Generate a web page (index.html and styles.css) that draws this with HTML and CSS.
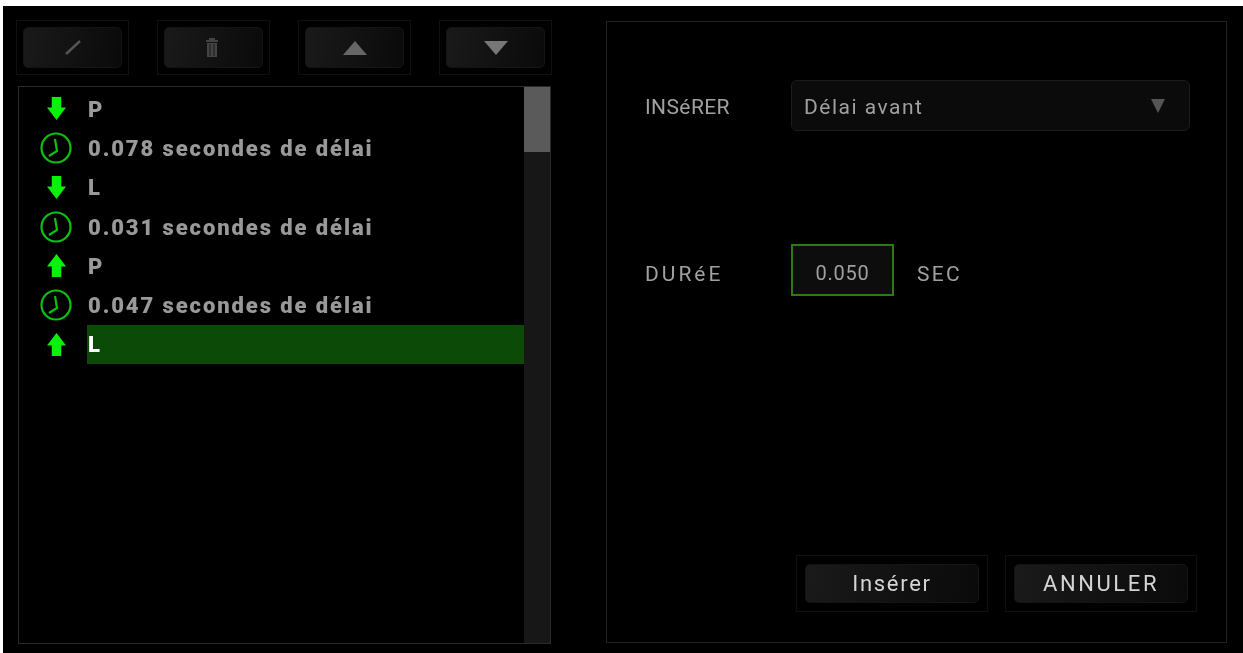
FILE: index.html
```html
<!DOCTYPE html>
<html lang="fr">
<head>
    <meta charset="UTF-8">
    <title>Macro</title>
    <link rel="stylesheet" href="styles.css">
</head>
<body>
    <svg class="defs" width="0" height="0">
        <symbol id="down" viewBox="0 0 20 26"><path d="M5 1h10v11h5L10 25 0 12h5z"/></symbol>
        <symbol id="up" viewBox="0 0 20 26"><path d="M5 25h10V14h5L10 1 0 14h5z"/></symbol>
        <symbol id="clock" viewBox="0 0 32 32">
            <circle cx="16" cy="16" r="14.5" fill="none" stroke="currentColor" stroke-width="2.2"/>
            <path d="M15 7l2 12-8 5" fill="none" stroke="currentColor" stroke-width="2.2"/>
        </symbol>
    </svg>
    <div class="app">
        <div class="listCol">
            <div class="toolbar">
                <div class="frame"><button class="btn">
                    <svg width="16" height="15" viewBox="0 0 16 15"><path d="M1 14L15 1" stroke="#555" stroke-width="2.4"/></svg>
                </button></div>
                <div class="frame"><button class="btn">
                    <svg class="trash" width="14" height="19" viewBox="0 0 14 19"><path d="M4 0h6v2h3v2H1V2h3zM2 5h10v14H2z" fill="#444"/><path d="M5 6v12M9 6v12" stroke="#1a1a1a"/></svg>
                </button></div>
                <div class="frame"><button class="btn">
                    <svg width="24" height="14" viewBox="0 0 24 14"><path d="M12 0l12 14H0z" fill="#666"/></svg>
                </button></div>
                <div class="frame"><button class="btn">
                    <svg width="24" height="14" viewBox="0 0 24 14"><path d="M0 0h24L12 14z" fill="#777"/></svg>
                </button></div>
            </div>
            <div class="list">
                <div class="rows">
                    <div class="row"><span class="ico"><svg class="arrow"><use href="#down"/></svg></span><span class="txt">P</span></div>
                    <div class="row"><span class="ico"><svg class="clock"><use href="#clock"/></svg></span><span class="txt">0.078 secondes de délai</span></div>
                    <div class="row"><span class="ico"><svg class="arrow"><use href="#down"/></svg></span><span class="txt">L</span></div>
                    <div class="row"><span class="ico"><svg class="clock"><use href="#clock"/></svg></span><span class="txt">0.031 secondes de délai</span></div>
                    <div class="row"><span class="ico"><svg class="arrow"><use href="#up"/></svg></span><span class="txt">P</span></div>
                    <div class="row"><span class="ico"><svg class="clock"><use href="#clock"/></svg></span><span class="txt">0.047 secondes de délai</span></div>
                    <div class="row selected"><span class="ico"><svg class="arrow"><use href="#up"/></svg></span><span class="txt">L</span></div>
                </div>
                <div class="scrollbar"><div class="thumb"></div></div>
            </div>
        </div>
        <div class="panel">
            <div class="field">
                <span class="label">INSéRER</span>
                <div class="select">
                    <span>Délai avant</span>
                    <svg width="14" height="14" viewBox="0 0 14 14"><path d="M0 0h14L7 14z" fill="#555"/></svg>
                </div>
            </div>
            <div class="field durationField">
                <span class="label">DURéE</span>
                <div class="input">0.050</div>
                <span class="unit">SEC</span>
            </div>
            <div class="footer">
                <div class="frame wide"><button class="btn">Insérer</button></div>
                <div class="frame wide"><button class="btn">ANNULER</button></div>
            </div>
        </div>
    </div>
</body>
</html>
```

FILE: styles.css
```css
html, body {
    height: 100%;
}
body {
    margin: 0;
    background: #fff;
    overflow: hidden;
    font-family: Roboto, "Liberation Sans", sans-serif;
}
.defs {
    position: absolute;
}
.app {
    display: flex;
    box-sizing: border-box;
    margin: 6px 0 0 3px;
    height: 647px;
    padding: 14px 0 0 13px;
    background: #000;
    filter: blur(0.4px);
}
.listCol {
    width: 537px;
}
.toolbar {
    display: flex;
    gap: 28px;
}
.frame {
    box-sizing: border-box;
    width: 113px;
    height: 55px;
    padding: 6px;
    border: 1px solid #101010;
}
.btn {
    display: flex;
    align-items: center;
    justify-content: center;
    box-sizing: border-box;
    width: 100%;
    height: 100%;
    padding: 0;
    border: 1px solid #141414;
    border-radius: 5px;
    background: linear-gradient(100deg, #1a1a1a, #0a0a0a);
    color: #d4d4d4;
    font: 22px Roboto, sans-serif;
    letter-spacing: 1.7px;
}
.trash {
    margin-right: 3px;
}
.list {
    display: flex;
    box-sizing: border-box;
    width: 533px;
    height: 558px;
    margin: 11px 0 0 2px;
    border: 1px solid #2a2a2a;
}
.rows {
    flex: 1;
    padding-top: 2px;
}
.row {
    display: flex;
    align-items: center;
    height: 39.3px;
}
.ico {
    display: flex;
    align-items: center;
    justify-content: center;
    box-sizing: border-box;
    flex: none;
    width: 68px;
    height: 100%;
    padding-left: 6px;
    color: #0fc00f;
}
.arrow {
    width: 19px;
    height: 25px;
    fill: #0bf00b;
}
.clock {
    width: 32px;
    height: 32px;
}
.txt {
    flex: 1;
    display: flex;
    align-items: center;
    height: 100%;
    padding: 1px 0 0 1px;
    box-sizing: border-box;
    color: #999;
    font-size: 22px;
    font-weight: 900;
    letter-spacing: 1.9px;
}
.selected .txt {
    background: #0c4a08;
    color: #fff;
}
.scrollbar {
    flex: none;
    width: 26px;
    background: #171717;
}
.thumb {
    height: 65px;
    background: #5a5a5a;
}
.panel {
    display: flex;
    flex-direction: column;
    box-sizing: border-box;
    width: 621px;
    height: 622px;
    margin: 1px 0 0 53px;
    padding: 58px 29px 30px 38px;
    border: 1px solid #222;
    color: #a0a0a0;
    font-size: 21px;
    letter-spacing: 0.4px;
}
.field {
    display: flex;
    align-items: center;
}
.durationField {
    margin-top: 113px;
}
.label {
    width: 146px;
    padding-top: 3px;
}
.durationField .label {
    padding-top: 7px;
    letter-spacing: 3px;
}
.select {
    display: flex;
    align-items: center;
    justify-content: space-between;
    box-sizing: border-box;
    width: 399px;
    height: 51px;
    padding: 0 24px 0 12px;
    border: 1px solid #1c1c1c;
    border-radius: 6px;
    background: #0b0b0b;
    letter-spacing: 1.5px;
}
.select span {
    padding-top: 2px;
}
.input {
    box-sizing: border-box;
    width: 103px;
    height: 52px;
    padding-top: 3px;
    border: 2px solid #2c7a12;
    background: #0d0d0d;
    line-height: 48px;
    text-align: center;
    font-size: 20px;
    letter-spacing: 0.8px;
}
.unit {
    margin-left: 23px;
    padding-top: 7px;
    letter-spacing: 2.3px;
}
.footer {
    display: flex;
    justify-content: flex-end;
    gap: 17px;
    margin-top: auto;
}
.wide {
    width: 192px;
    height: 57px;
    padding: 8px;
}
.wide + .wide .btn {
    letter-spacing: 2.6px;
}
```
